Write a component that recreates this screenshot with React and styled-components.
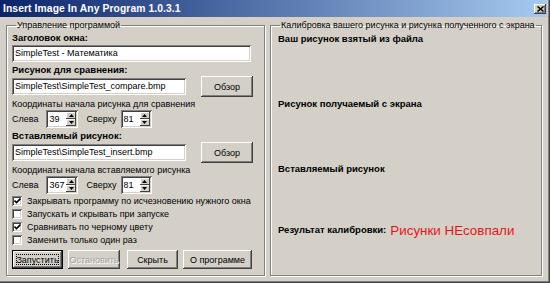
import React from 'react';
import styled, { createGlobalStyle } from 'styled-components';

const GlobalStyle = createGlobalStyle`
  html, body {
    margin: 0;
    padding: 0;
    background: #d4d0c8;
  }
  body {
    width: 550px;
    height: 283px;
    overflow: hidden;
    font-family: "Liberation Sans", Arial, sans-serif;
    color: #000;
  }
`;

const Window = styled.div`
  width: 550px;
  height: 283px;
  box-sizing: border-box;
  background: #d4d0c8;
  display: flex;
  flex-direction: column;
  padding: 0 3px 3px 0;
  box-shadow: inset -1px -1px #404040, inset -2px -2px #808080;
`;

const TitleBar = styled.div`
  height: 17px;
  flex-shrink: 0;
  display: flex;
  align-items: center;
  justify-content: space-between;
  padding: 0 1px 0 3px;
  background: linear-gradient(to right, #0a246a, #a6caf0);
  color: #fff;
  font-weight: bold;
  font-size: 10.3px;
  letter-spacing: 0.1px;
`;

const CloseButton = styled.div`
  width: 12px;
  height: 10px;
  background: #d4d0c8;
  display: flex;
  align-items: center;
  justify-content: center;
  box-shadow: inset -1px -1px #404040, inset 1px 1px #fff, inset -2px -2px #808080;
`;

const Body = styled.div`
  flex: 1;
  display: flex;
  gap: 5px;
  padding: 3px 5px 4px 6px;
  min-height: 0;
`;

const Group = styled.fieldset`
  margin: 0;
  padding: 0 ${p => p.$padR || 5}px 3px ${p => p.$padL || 5}px;
  width: ${p => (p.$width ? `${p.$width}px` : 'auto')};
  flex: ${p => (p.$width ? '0 0 auto' : '1')};
  box-sizing: border-box;
  border: 1px solid #808080;
  box-shadow: inset 1px 1px #fff, 1px 1px #fff;
  display: flex;
  flex-direction: column;
  min-width: 0;
`;

const Legend = styled.legend`
  padding: 0 1px;
  margin-left: ${p => p.$ml || 4}px;
  font-size: 9px;
  line-height: 10px;
  white-space: nowrap;
`;

const Label = styled.div`
  font-weight: bold;
  font-size: 9.5px;
  line-height: 12px;
  height: 12px;
  margin-top: ${p => p.$mt || 0}px;
  white-space: nowrap;
`;

const Caption = styled.div`
  font-size: 9px;
  line-height: 12px;
  height: 12px;
  margin-top: ${p => p.$mt || 0}px;
  white-space: nowrap;
`;

const Edit = styled.div`
  width: ${p => p.$width}px;
  height: 17px;
  box-sizing: border-box;
  background: #fff;
  padding: 0 3px;
  font-size: 9px;
  line-height: 17px;
  margin-top: ${p => p.$mt || 0}px;
  white-space: nowrap;
  overflow: hidden;
  box-shadow: inset 1px 1px #808080, inset -1px -1px #fff, inset 2px 2px #404040, inset -2px -2px #d4d0c8;
`;

const Row = styled.div`
  display: flex;
  align-items: center;
  height: ${p => p.$h}px;
  gap: ${p => p.$gap || 0}px;
  margin-top: ${p => p.$mt || 0}px;
  margin-left: ${p => p.$ml || 0}px;
`;

const Button = styled.div`
  position: relative;
  width: ${p => p.$width}px;
  height: ${p => p.$h || 18}px;
  margin-left: ${p => p.$ml || 0}px;
  box-sizing: border-box;
  background: #d4d0c8;
  display: flex;
  align-items: center;
  justify-content: center;
  font-size: 9px;
  white-space: nowrap;
  color: ${p => (p.$disabled ? '#a0a0a0' : '#000')};
  text-shadow: ${p => (p.$disabled ? '1px 1px #fff' : 'none')};
  border: ${p => (p.$default ? '1px solid #000' : 'none')};
  box-shadow: inset -1px -1px #404040, inset 1px 1px #fff, inset -2px -2px #808080, inset 2px 2px #d4d0c8;

  ${p => p.$default && `
    &::after {
      content: '';
      position: absolute;
      inset: 3px;
      border: 1px dotted #000;
    }
  `}
`;

const SpinBox = styled.div`
  width: ${p => p.$width}px;
  height: 18px;
  box-sizing: border-box;
  background: #fff;
  display: flex;
  padding: 2px;
  box-shadow: inset 1px 1px #808080, inset -1px -1px #fff, inset 2px 2px #404040, inset -2px -2px #d4d0c8;
`;

const SpinValue = styled.div`
  flex: 1;
  font-size: 9px;
  line-height: 14px;
  padding-left: 1px;
`;

const SpinButtons = styled.div`
  width: 10px;
  display: flex;
  flex-direction: column;
`;

const SpinArrow = styled.div`
  flex: 1;
  background: #d4d0c8;
  display: flex;
  align-items: center;
  justify-content: center;
  box-shadow: inset -1px -1px #404040, inset 1px 1px #fff;
`;

const CheckRow = styled.div`
  display: flex;
  align-items: center;
  gap: 5px;
  height: 13px;
  font-size: 9px;
  white-space: nowrap;
`;

const CheckBox = styled.div`
  width: 10px;
  height: 10px;
  box-sizing: border-box;
  background: #fff;
  display: flex;
  align-items: center;
  justify-content: center;
  box-shadow: inset 1px 1px #808080, inset -1px -1px #fff, inset 2px 2px #404040, inset -2px -2px #d4d0c8;
`;

const CheckList = styled.div`
  display: flex;
  flex-direction: column;
  margin-top: ${p => p.$mt || 0}px;
`;

const Section = styled.div`
  height: ${p => p.$h}px;
  flex-shrink: 0;
`;

const ResultRow = styled.div`
  display: flex;
  align-items: center;
  gap: 4px;
  height: 16px;
`;

const ResultText = styled.span`
  color: #e8141c;
  font-size: 13.4px;
  white-space: nowrap;
`;

function Spin({ value, width = 32 }) {
  return (
    <SpinBox $width={width}>
      <SpinValue>{value}</SpinValue>
      <SpinButtons>
        <SpinArrow>
          <svg width="5" height="3" viewBox="0 0 5 3"><polygon points="2.5,0 5,3 0,3" fill="#000" /></svg>
        </SpinArrow>
        <SpinArrow>
          <svg width="5" height="3" viewBox="0 0 5 3"><polygon points="0,0 5,0 2.5,3" fill="#000" /></svg>
        </SpinArrow>
      </SpinButtons>
    </SpinBox>
  );
}

function Check({ checked, children }) {
  return (
    <CheckRow>
      <CheckBox>
        {checked && (
          <svg width="7" height="7" viewBox="0 0 7 7">
            <polyline points="0.5,3.5 2.5,5.5 6.5,1.5" fill="none" stroke="#000" strokeWidth="1.6" />
          </svg>
        )}
      </CheckBox>
      {children}
    </CheckRow>
  );
}

function CoordRow({ left, top }) {
  return (
    <Row $h={18}>
      <Caption>Слева</Caption>
      <Row $h={18} $gap={8} $ml={8}>
        <Spin value={left} />
        <Caption>Сверху</Caption>
      </Row>
      <Row $h={18} $ml={4}>
        <Spin value={top} width={31} />
      </Row>
    </Row>
  );
}

export default function App() {
  return (
    <>
      <GlobalStyle />
      <Window>
        <TitleBar>
          <span>Insert Image In Any Program 1.0.3.1</span>
          <CloseButton>
            <svg width="7" height="6" viewBox="0 0 7 6">
              <path d="M0.5 0.5 L6.5 5.5 M6.5 0.5 L0.5 5.5" stroke="#000" strokeWidth="1.5" />
            </svg>
          </CloseButton>
        </TitleBar>
        <Body>
          <Group $width={259}>
            <Legend>Управление программой</Legend>
            <Label $mt={2}>Заголовок окна:</Label>
            <Edit $width={239} $mt={1}>SimpleTest - Математика</Edit>
            <Label $mt={2}>Рисунок для сравнения:</Label>
            <Row $h={21} $gap={15}>
              <Edit $width={174}>SimpleTest\SimpleTest_compare.bmp</Edit>
              <Button $width={52} $h={21}>Обзор</Button>
            </Row>
            <Caption $mt={1}>Координаты начала рисунка для сравнения</Caption>
            <CoordRow left="39" top="81" />
            <Label $mt={2}>Вставляемый рисунок:</Label>
            <Row $h={21} $gap={15}>
              <Edit $width={174}>SimpleTest\SimpleTest_insert.bmp</Edit>
              <Button $width={52} $h={21}>Обзор</Button>
            </Row>
            <Caption $mt={1}>Координаты начала вставляемого рисунка</Caption>
            <CoordRow left="367" top="81" />
            <CheckList $mt={0}>
              <Check checked>Закрывать программу по исчезновению нужного окна</Check>
              <Check>Запускать и скрывать при запуске</Check>
              <Check checked>Сравнивать по черному цвету</Check>
              <Check>Заменить только один раз</Check>
            </CheckList>
            <Row $h={19} $mt={4}>
              <Button $width={51} $h={19} $default>Запустить</Button>
              <Button $width={52} $h={19} $ml={5} $disabled>Остановить</Button>
              <Button $width={51} $h={19} $ml={7}>Скрыть</Button>
              <Button $width={69} $h={19} $ml={5}>О программе</Button>
            </Row>
          </Group>
          <Group $padL={7}>
            <Legend $ml={2}>Калибровка вашего рисунка и рисунка полученного с экрана</Legend>
            <Section $h={65}>
              <Label $mt={3}>Ваш рисунок взятый из файла</Label>
            </Section>
            <Section $h={65}>
              <Label $mt={3}>Рисунок получаемый с экрана</Label>
            </Section>
            <Section $h={62}>
              <Label $mt={3}>Вставляемый рисунок</Label>
            </Section>
            <ResultRow>
              <Label>Результат калибровки:</Label>
              <ResultText>Рисунки НЕсовпали</ResultText>
            </ResultRow>
          </Group>
        </Body>
      </Window>
    </>
  );
}
